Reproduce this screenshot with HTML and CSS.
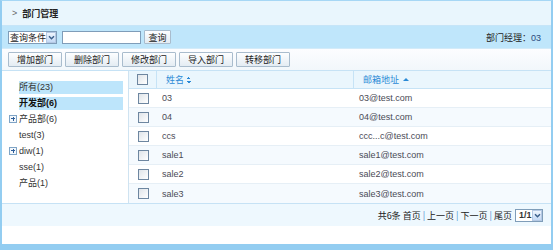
FILE: index.html
```html
<html>
    <head>
        <link rel="stylesheet" href="styles.css">
    </head>
    <body>
        <div class="frame">
            <div class="title">
                <span class="chevron">&gt;</span>
                <span class="title-text">部门管理</span>
            </div>
            <div class="search">
                <div class="search-left">
                    <div class="fake-select cond"><span class="sel-text">查询条件</span><span class="sel-btn"><svg width="7" height="7" viewBox="0 0 7 7"><path d="M1 2.2 L3.5 4.8 L6 2.2" fill="none" stroke="#3a5f8a" stroke-width="1.4"/></svg></span></div>
                    <input type="text" class="search-input">
                    <button class="btn search-btn">查询</button>
                </div>
                <div class="manager">部门经理：<span class="mgr-val">03</span></div>
            </div>
            <div class="toolbar">
                <button class="btn">增加部门</button>
                <button class="btn">删除部门</button>
                <button class="btn">修改部门</button>
                <button class="btn">导入部门</button>
                <button class="btn">转移部门</button>
            </div>
            <div class="main">
                <div class="tree">
                    <div class="tree-item selected"><span class="node">所有(23)</span></div>
                    <div class="tree-item selected bold"><span class="node">开发部(6)</span></div>
                    <div class="tree-item"><span class="plus"></span><span class="node">产品部(6)</span></div>
                    <div class="tree-item"><span class="node">test(3)</span></div>
                    <div class="tree-item"><span class="plus"></span><span class="node">diw(1)</span></div>
                    <div class="tree-item"><span class="node">sse(1)</span></div>
                    <div class="tree-item"><span class="node">产品(1)</span></div>
                </div>
                <div class="grid">
                    <div class="grid-row head">
                        <div class="cell chk"><span class="box"></span></div>
                        <div class="cell name">姓名<span class="sort-both"></span></div>
                        <div class="cell mail">邮箱地址<span class="sort-up"></span></div>
                    </div>
                    <div class="grid-row">
                        <div class="cell chk"><span class="box"></span></div>
                        <div class="cell name">03</div>
                        <div class="cell mail">03@test.com</div>
                    </div>
                    <div class="grid-row alt">
                        <div class="cell chk"><span class="box"></span></div>
                        <div class="cell name">04</div>
                        <div class="cell mail">04@test.com</div>
                    </div>
                    <div class="grid-row">
                        <div class="cell chk"><span class="box"></span></div>
                        <div class="cell name">ccs</div>
                        <div class="cell mail">ccc...c@test.com</div>
                    </div>
                    <div class="grid-row alt">
                        <div class="cell chk"><span class="box"></span></div>
                        <div class="cell name">sale1</div>
                        <div class="cell mail">sale1@test.com</div>
                    </div>
                    <div class="grid-row">
                        <div class="cell chk"><span class="box"></span></div>
                        <div class="cell name">sale2</div>
                        <div class="cell mail">sale2@test.com</div>
                    </div>
                    <div class="grid-row alt">
                        <div class="cell chk"><span class="box"></span></div>
                        <div class="cell name">sale3</div>
                        <div class="cell mail">sale3@test.com</div>
                    </div>
                </div>
            </div>
            <div class="pager">
                <span class="pager-links">共6条 首页<i>|</i>上一页<i>|</i>下一页<i>|</i>尾页</span>
                <div class="fake-select page"><span class="sel-text">1/1</span><span class="sel-btn"><svg width="7" height="7" viewBox="0 0 7 7"><path d="M1 2.2 L3.5 4.8 L6 2.2" fill="none" stroke="#3a5f8a" stroke-width="1.4"/></svg></span></div>
            </div>
            <div class="blank"></div>
        </div>
    </body>
</html>
```

FILE: styles.css
```css
body {
    margin: 0;
    background: #fff;
    font-family: "Liberation Sans", "Noto Sans CJK SC", Arial, sans-serif;
    font-size: 9px;
    color: #333;
}
.frame {
    width: 553px;
    height: 250px;
    box-sizing: border-box;
    border-top: 1px solid #a6d7f5;
    border-left: 2px solid #93cdf1;
    border-right: 2px solid #93cdf1;
    border-bottom: 6px solid #93cdf1;
    display: flex;
    flex-direction: column;
    overflow: hidden;
}
.title {
    height: 25px;
    background: #e9f6fd;
    border-bottom: 1px solid #c6e5f8;
    display: flex;
    align-items: center;
    padding-left: 10px;
    box-sizing: border-box;
    flex-shrink: 0;
}
.chevron {
    color: #666;
    font-size: 9px;
    margin-right: 5px;
}
.title-text {
    font-weight: bold;
    font-size: 9px;
    color: #222;
    font-family: "Noto Sans CJK SC", sans-serif;
}
.search {
    height: 22px;
    background: #bfe6fb;
    display: flex;
    align-items: center;
    justify-content: space-between;
    padding: 0 10px 0 6px;
    box-sizing: border-box;
    flex-shrink: 0;
}
.search-left {
    display: flex;
    align-items: center;
}
.fake-select {
    display: flex;
    align-items: center;
    background: #fff;
    border: 1px solid #7f9db9;
    height: 13px;
    box-sizing: border-box;
    font-size: 9px;
    font-family: "Noto Sans CJK SC", sans-serif;
    color: #222;
    overflow: hidden;
}
.fake-select.cond {
    width: 49px;
}
.sel-text {
    flex: 1;
    padding-left: 1px;
    white-space: nowrap;
    line-height: 11px;
    overflow: hidden;
}
.sel-btn {
    width: 10px;
    height: 11px;
    flex-shrink: 0;
    background: linear-gradient(#eef5fd, #c3d9f5);
    border: 1px solid #b5c9e4;
    box-sizing: border-box;
    display: flex;
    align-items: center;
    justify-content: center;
}
.search-input {
    width: 79px;
    height: 13px;
    border: 1px solid #7f9db9;
    box-sizing: border-box;
    margin-left: 5px;
    padding: 0;
}
.btn {
    height: 15px;
    padding: 0;
    border: 1px solid #a9bccd;
    border-radius: 1px;
    background: linear-gradient(#fdfeff, #e4ecf3);
    font-family: "Noto Sans CJK SC", sans-serif;
    font-size: 9px;
    color: #222;
    line-height: 13px;
    width: 54px;
}
.search-btn {
    width: 27px;
    height: 14px;
    margin-left: 3px;
}
.manager {
    font-family: "Noto Sans CJK SC", sans-serif;
    font-size: 9px;
    color: #222;
}
.mgr-val {
    font-family: "Liberation Sans", sans-serif;
    color: #2c4a7a;
}
.toolbar {
    height: 23px;
    background: linear-gradient(#fcfdff, #f2f7fb);
    border-top: 1px solid #d3ebf9;
    border-bottom: 1px solid #c6e2f5;
    display: flex;
    align-items: center;
    gap: 3px;
    padding-left: 6px;
    box-sizing: border-box;
    flex-shrink: 0;
}
.main {
    display: flex;
    height: 133px;
    flex-shrink: 0;
    border-bottom: 1px solid #c6e2f5;
    box-sizing: border-box;
}
.tree {
    width: 127px;
    border-right: 1px solid #cfe3f1;
    box-sizing: border-box;
    padding-top: 8px;
    background: #fff;
}
.tree-item {
    height: 16px;
    display: flex;
    align-items: center;
    padding-left: 17px;
    position: relative;
    font-size: 9px;
}
.tree-item .node {
    line-height: 13px;
    height: 13px;
    flex: 1;
    margin-right: 5px;
    color: #333;
}
.tree-item.selected .node {
    background: #bde5fb;
}
.tree-item.bold .node {
    font-weight: bold;
    color: #111;
}
.plus {
    position: absolute;
    left: 7px;
    top: 4px;
    width: 8px;
    height: 8px;
    box-sizing: border-box;
    border: 1px solid #7fa4c6;
    background: #f4f8fc;
}
.plus::before, .plus::after {
    content: "";
    position: absolute;
    background: #2f5e9a;
}
.plus::before {
    left: 1px;
    top: 2px;
    width: 4px;
    height: 1px;
}
.plus::after {
    left: 2.5px;
    top: 0.5px;
    width: 1px;
    height: 4px;
}
.grid {
    flex: 1;
    display: flex;
    flex-direction: column;
}
.grid-row {
    height: 19px;
    display: flex;
    align-items: stretch;
    border-bottom: 1px solid #e6eff6;
    box-sizing: border-box;
    background: #fff;
}
.grid-row:last-child {
    border-bottom: none;
}
.grid-row.alt {
    background: #f5fafe;
}
.grid-row.head {
    height: 18px;
    background: #eaf6fd;
    border-bottom: 1px solid #c6e3f6;
}
.cell {
    display: flex;
    align-items: center;
    font-size: 9px;
    color: #4a4a55;
    box-sizing: border-box;
}
.chk {
    width: 28px;
    justify-content: center;
}
.name {
    width: 197px;
    padding-left: 5px;
}
.mail {
    flex: 1;
    padding-left: 5px;
}
.head .chk, .head .name {
    border-right: 1px solid #c6e3f6;
}
.head .name, .head .mail {
    color: #2a8ad6;
    padding-left: 9px;
    font-family: "Noto Sans CJK SC", sans-serif;
}
.box {
    width: 9px;
    height: 9px;
    border: 1px solid #6d86a0;
    background: linear-gradient(135deg, #dfe4e9, #fff);
}
.sort-both {
    width: 4px;
    height: 6px;
    margin-left: 3px;
    margin-top: 1px;
    background:
        linear-gradient(135deg, transparent 50%, #2a8ad6 50%) 0 0 / 2px 2px no-repeat,
        linear-gradient(225deg, transparent 50%, #2a8ad6 50%) 2px 0 / 2px 2px no-repeat,
        linear-gradient(45deg, transparent 50%, #2a8ad6 50%) 0 4px / 2px 2px no-repeat,
        linear-gradient(315deg, transparent 50%, #2a8ad6 50%) 2px 4px / 2px 2px no-repeat;
}
.sort-up {
    width: 0;
    height: 0;
    margin-left: 4px;
    border-left: 3px solid transparent;
    border-right: 3px solid transparent;
    border-bottom: 3px solid #2a8ad6;
}
.pager {
    height: 22px;
    background: #eef8fe;
    display: flex;
    align-items: center;
    justify-content: flex-end;
    padding-right: 8px;
    gap: 3px;
    font-family: "Noto Sans CJK SC", sans-serif;
    font-size: 9px;
    color: #222;
    flex-shrink: 0;
}
.pager i {
    font-style: normal;
    color: #4a8fcf;
    margin: 0 2px;
}
.fake-select.page {
    width: 28px;
    font-family: "Liberation Sans", sans-serif;
    font-weight: bold;
    font-size: 9px;
    color: #333;
}
.fake-select.page .sel-text {
    padding-left: 3px;
}
.blank {
    flex: 1;
    background: #fff;
}
```
